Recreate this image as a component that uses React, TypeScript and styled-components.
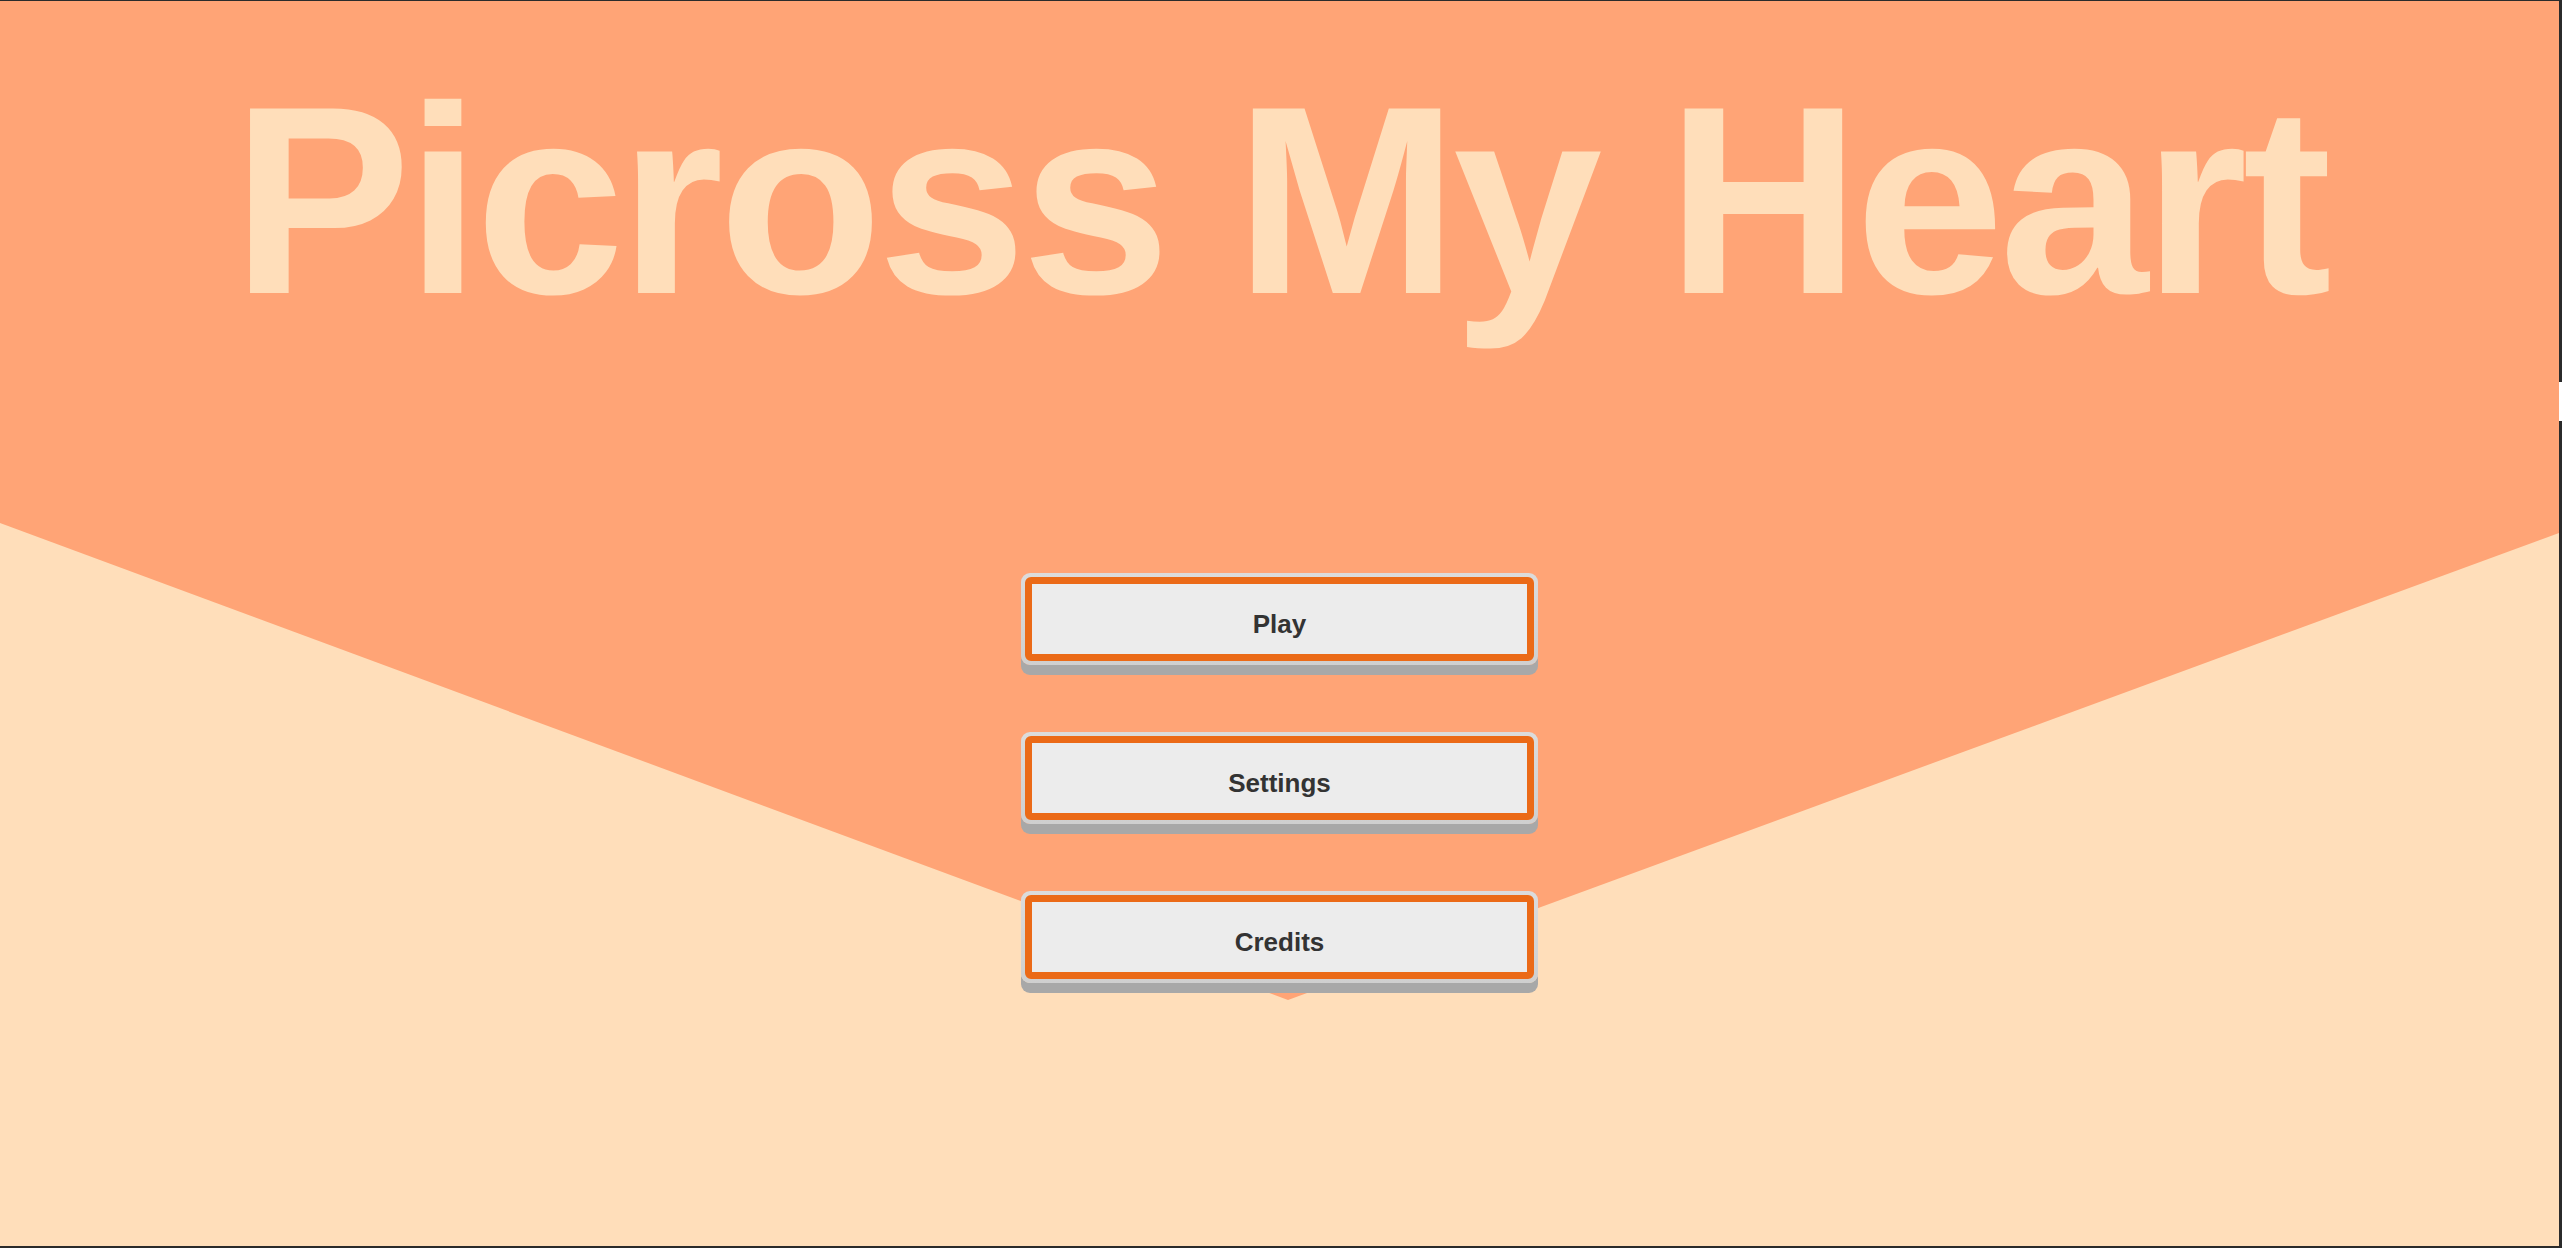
import React from "react";
import styled, { createGlobalStyle } from "styled-components";

const GlobalStyle = createGlobalStyle`
  html, body {
    margin: 0;
    padding: 0;
    background: #2b2b2b;
    overflow: hidden;
  }
  * { box-sizing: border-box; }
`;

const Frame = styled.div`
  width: 2562px;
  height: 1248px;
  display: flex;
  flex-direction: column;
  background: #2b2b2b;
`;

const TopEdge = styled.div`
  height: 1px;
  flex: none;
`;

const BottomEdge = styled.div`
  height: 2px;
  flex: none;
`;

const MiddleRow = styled.div`
  flex: 1;
  display: flex;
`;

const RightEdge = styled.div`
  width: 3px;
  display: flex;
  flex-direction: column;
`;

const EdgeSegment = styled.div<{ $h?: number; $light?: boolean }>`
  height: ${(p) => (p.$h ? `${p.$h}px` : "auto")};
  flex: ${(p) => (p.$h ? "none" : "1")};
  background: ${(p) => (p.$light ? "#ffffff" : "#2b2b2b")};
`;

const Screen = styled.main`
  position: relative;
  width: 2559px;
  height: 100%;
  background: #ffdeba;
  display: flex;
  flex-direction: column;
  align-items: center;
  padding-top: 65px;
  font-family: "Liberation Sans", Arial, sans-serif;

  &::before {
    content: "";
    position: absolute;
    inset: 0;
    background: #ffa476;
    clip-path: polygon(0 0, 100% 0, 100% 532px, 1288px 999px, 0 522px);
  }
`;

const Title = styled.h1`
  position: relative;
  margin: 0;
  font-family: "Liberation Sans", Arial, sans-serif;
  font-weight: 700;
  font-size: 268px;
  line-height: 268px;
  color: #ffdeba;
  white-space: nowrap;
  letter-spacing: -5px;
`;

const Menu = styled.nav`
  position: relative;
  margin-top: 239px;
  display: flex;
  flex-direction: column;
  gap: 67px;
`;

const MenuButton = styled.button`
  width: 517px;
  height: 92px;
  padding: 4px;
  border: none;
  border-radius: 9px;
  background: linear-gradient(#dcdcdc, #cfcfcf);
  box-shadow: 0 10px 0 #a8a8a8;
  cursor: pointer;
  display: flex;
`;

const ButtonFace = styled.span`
  flex: 1;
  display: flex;
  align-items: center;
  justify-content: center;
  border: 7px solid #eb6a17;
  border-radius: 6px;
  background: #ececec;
  font-family: "Liberation Sans", Arial, sans-serif;
  font-weight: 700;
  font-size: 26px;
  color: #333333;
  padding-top: 10px;
`;

const items = ["Play", "Settings", "Credits"];

export default function App() {
  return (
    <>
      <GlobalStyle />
      <Frame>
        <TopEdge />
        <MiddleRow>
          <Screen>
            <Title>Picross My Heart</Title>
            <Menu>
              {items.map((label) => (
                <MenuButton key={label}>
                  <ButtonFace>{label}</ButtonFace>
                </MenuButton>
              ))}
            </Menu>
          </Screen>
          <RightEdge>
            <EdgeSegment $h={381} />
            <EdgeSegment $h={39} $light />
            <EdgeSegment />
          </RightEdge>
        </MiddleRow>
        <BottomEdge />
      </Frame>
    </>
  );
}
